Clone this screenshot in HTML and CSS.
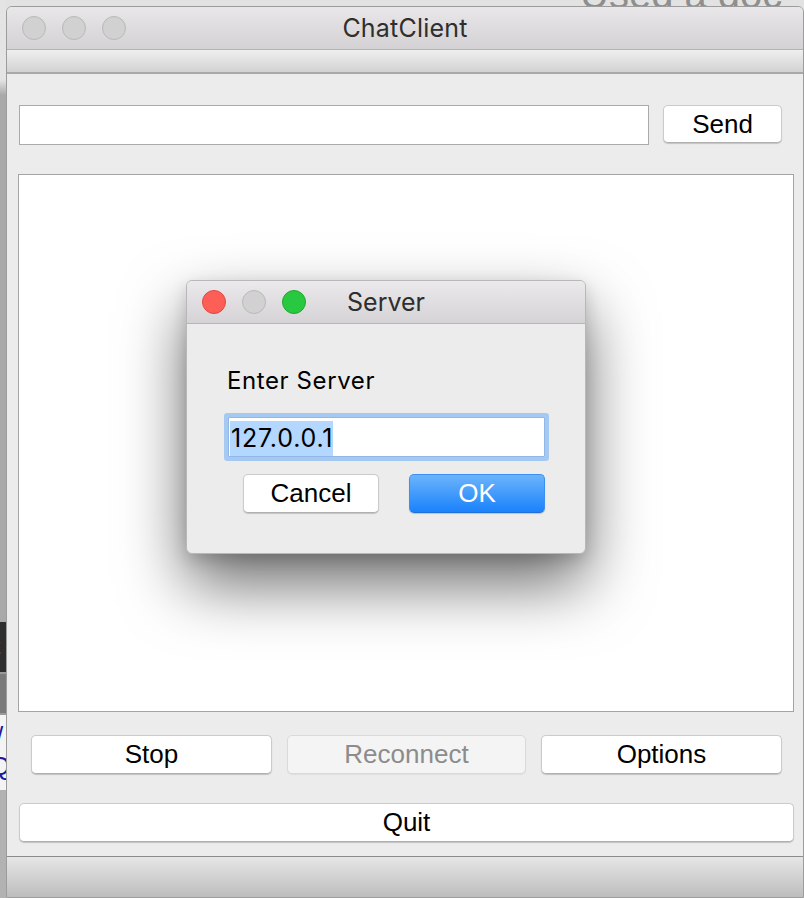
FILE: index.html
```html
<!DOCTYPE html>
<html>
<head>
<meta charset="utf-8">
<title>ChatClient</title>
<link rel="stylesheet" href="styles.css">
</head>
<body>
<div class="desktop">
  <div class="desk-clip"><div class="desk-text">Used a doc</div></div>
  <div class="desk-strip">
    <div class="ds-top"></div>
    <div class="ds-dark">t</div>
    <div class="ds-mid"></div>
    <div class="ds-white"><span class="ds-g1">/</span><span class="ds-g2">Q</span></div>
    <div class="ds-bottom"></div>
  </div>

  <div class="window">
    <div class="titlebar">
      <div class="lights">
        <span class="light off"></span>
        <span class="light off"></span>
        <span class="light off"></span>
      </div>
      <div class="title">ChatClient</div>
    </div>
    <div class="toolbar"></div>
    <div class="content">
      <div class="send-row">
        <div class="line-edit"></div>
        <button class="btn send">Send</button>
      </div>
      <div class="chat-area"></div>
      <div class="btn-row">
        <button class="btn">Stop</button>
        <button class="btn disabled">Reconnect</button>
        <button class="btn">Options</button>
      </div>
      <button class="btn quit">Quit</button>
    </div>
    <div class="statusbar"></div>
  </div>

  <div class="dialog">
    <div class="dlg-titlebar">
      <div class="lights">
        <span class="light red"></span>
        <span class="light off"></span>
        <span class="light green"></span>
      </div>
      <div class="dlg-title">Server</div>
    </div>
    <div class="dlg-body">
      <div class="dlg-label">Enter Server</div>
      <div class="dlg-field"><span class="sel">127.0.0.1</span></div>
      <div class="dlg-buttons">
        <button class="btn dbtn">Cancel</button>
        <button class="btn dbtn ok">OK</button>
      </div>
    </div>
  </div>
</div>
</body>
</html>
```

FILE: styles.css
```css
* { box-sizing: border-box; }
html, body { margin: 0; padding: 0; }
body {
  width: 804px;
  height: 898px;
  overflow: hidden;
  background: #e2e2e2;
  font-family: "Liberation Sans", Arial, sans-serif;
}
.desktop {
  position: relative;
  width: 804px;
  height: 898px;
  padding: 6px 0 0 6px;
  display: flex;
}
.desk-clip {
  position: absolute;
  left: 560px;
  top: 0;
  width: 244px;
  height: 7px;
  overflow: hidden;
}
.desk-text {
  position: absolute;
  left: 20px;
  top: -26px;
  font-family: "Liberation Sans", Arial, sans-serif;
  font-size: 40px;
  line-height: 40px;
  color: #8e8e8e;
  white-space: nowrap;
}
.desk-strip {
  position: absolute;
  left: 0;
  top: 0;
  width: 6px;
  height: 898px;
  display: flex;
  flex-direction: column;
}
.ds-top { height: 622px; background: linear-gradient(#e4e4e4 0, #e4e4e4 80px, #a9a9a9 95px, #a9a9a9 100%); }
.ds-dark {
  height: 50px;
  background: #2e2e2e;
  color: #d8d8d8;
  font-size: 22px;
  line-height: 50px;
  text-indent: -6px;
  overflow: hidden;
}
.ds-mid { height: 43px; background: #7a7a7a; border-top: 2px solid #9a9a9a; border-bottom: 2px solid #9a9a9a; }
.ds-white {
  height: 75px;
  background: #f4f4f4;
  position: relative;
  overflow: hidden;
  color: #1a1aa0;
  font-size: 26px;
  line-height: 30px;
}
.ds-g1 { position: absolute; left: -4px; top: 6px; }
.ds-g2 { position: absolute; left: -10px; top: 36px; }
.ds-bottom { flex: 1; background: #b2b2b2; }

.window {
  position: relative;
  z-index: 1;
  flex: 1;
  display: flex;
  flex-direction: column;
  background: #ececec;
  border: 1px solid #9c9c9c;
  border-radius: 6px 6px 0 0;
  overflow: hidden;
}
.titlebar {
  height: 43px;
  flex: none;
  position: relative;
  display: flex;
  align-items: center;
  justify-content: center;
  background: linear-gradient(#e9e7e9, #d3d1d3);
  border-bottom: 1px solid #b2b2b2;
}
.lights {
  position: absolute;
  left: 15px;
  top: 9px;
  display: flex;
  gap: 16px;
}
.light {
  width: 24px;
  height: 24px;
  border-radius: 50%;
  display: block;
}
.light.off { background: #d1d1d1; border: 1px solid #b9b9b9; }
.light.red { background: #fd5f57; border: 1px solid #e2463f; }
.light.green { background: #28c840; border: 1px solid #1eaa2e; }
.title {
  font-family: Inter, "Liberation Sans", sans-serif;
  font-size: 25px;
  letter-spacing: 0.2px;
  color: #2e2e2e;
}
.toolbar {
  height: 24px;
  flex: none;
  background: linear-gradient(#efefef, #d2d2d2);
  border-bottom: 2px solid #a8a8a8;
}
.content {
  flex: none;
  display: flex;
  flex-direction: column;
  padding: 31px 9px 0 11px;
}
.send-row {
  display: grid;
  grid-template-columns: 630px 119px;
  gap: 14px;
  padding-left: 1px;
  align-items: start;
}
.line-edit {
  height: 40px;
  background: #fff;
  border: 1px solid #aaaaaa;
}
.btn {
  font-family: "Liberation Sans", Arial, sans-serif;
  font-size: 26px;
  color: #000;
  background: #fff;
  border: 1px solid #cbcbcb;
  border-bottom-color: #b0b0b0;
  border-radius: 5px;
  box-shadow: 0 1px 1px rgba(0,0,0,0.18);
  padding: 0;
  margin: 0;
}
.send { height: 38px; }
.chat-area {
  margin-top: 29px;
  height: 538px;
  background: #fff;
  border: 1px solid #a4a4a4;
}
.btn-row {
  margin-top: 23px;
  padding: 0 12px 0 13px;
  display: grid;
  grid-template-columns: 241px 239px 241px;
  gap: 15px;
}
.btn-row .btn { height: 39px; }
.btn.disabled {
  background: #f4f4f4;
  color: #8c8c8c;
  border-color: #dadada;
  box-shadow: 0 1px 1px rgba(0,0,0,0.06);
}
.quit {
  margin-top: 29px;
  margin-left: 1px;
  height: 39px;
  width: 775px;
}
.statusbar {
  margin-top: 14px;
  flex: 1;
  border-top: 1px solid #8c8c8c;
  background: linear-gradient(#e6e6e6, #bdbdbd);
}

.dialog {
  position: absolute;
  z-index: 2;
  left: 186px;
  top: 280px;
  width: 400px;
  height: 274px;
  background: #ececec;
  border: 1px solid #b8b8b8;
  border-radius: 6px;
  box-shadow: 0 30px 64px rgba(0,0,0,0.58), 0 6px 16px rgba(0,0,0,0.15);
  overflow: hidden;
  display: flex;
  flex-direction: column;
}
.dlg-titlebar {
  height: 43px;
  flex: none;
  position: relative;
  display: flex;
  align-items: center;
  justify-content: center;
  background: linear-gradient(#ebe9eb, #d5d3d5);
  border-bottom: 1px solid #b6b6b6;
}
.dlg-titlebar .lights { left: 15px; top: 9px; }
.dlg-title {
  font-family: Inter, "Liberation Sans", sans-serif;
  font-size: 25px;
  color: #2e2e2e;
}
.dlg-body {
  padding: 43px 39px 0 40px;
  display: flex;
  flex-direction: column;
}
.dlg-label {
  font-family: Inter, "Liberation Sans", sans-serif;
  font-size: 24px;
  letter-spacing: 0.6px;
  color: #000;
  line-height: 28px;
}
.dlg-field {
  margin-top: 22px;
  margin-left: 1px;
  width: 317px;
  height: 40px;
  background: #fff;
  border: 1px solid #8fb8e8;
  box-shadow: 0 0 0 4px #a6c9f1;
  border-radius: 1px;
  padding: 3px 0 0 1px;
  display: flex;
}
.sel {
  background: #b3d7ff;
  font-family: Inter, "Liberation Sans", sans-serif;
  font-size: 25px;
  letter-spacing: 0.8px;
  color: #000;
  line-height: 35px;
  height: 35px;
  padding: 0 0 0 1px;
}
.dlg-buttons {
  margin-top: 17px;
  padding-left: 16px;
  display: grid;
  grid-template-columns: 136px 136px;
  gap: 30px;
}
.dbtn { height: 39px; }
.ok {
  color: #fff;
  background: linear-gradient(#6cb4fb, #1a82fb);
  border: 1px solid #3c8ff3;
  border-bottom-color: #1e6fd8;
}
```
